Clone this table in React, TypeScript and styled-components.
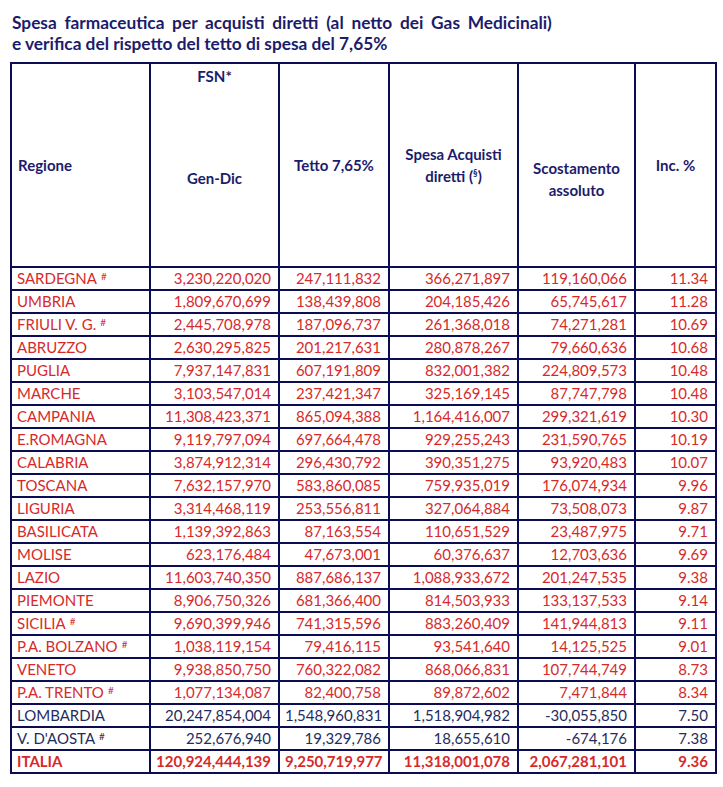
import React from "react";
import styled, { createGlobalStyle } from "styled-components";

const Global = createGlobalStyle`
  html, body { margin: 0; padding: 0; background: #fff; }
  body { font-family: Lato, "Open Sans", "Liberation Sans", sans-serif; }
`;

const Page = styled.div`
  width: 723px;
  height: 787px;
  padding: 12px 0 0 10px;
  box-sizing: border-box;
`;

const Title = styled.h1`
  margin: 0 0 0 2px;
  font-size: 17.3px;
  line-height: 21px;
  font-weight: 700;
  color: #1c1c6b;
`;

const TitleLine = styled.span<{ $ws: number }>`
  display: block;
  word-spacing: ${(p) => p.$ws}px;
`;

const Table = styled.table`
  margin-top: 8px;
  border-collapse: collapse;
  table-layout: fixed;
  width: 705px;
  border: 2.5px solid #0c0c55;
`;

const Th = styled.th<{ $align?: string; $valign?: string }>`
  border: 2px solid #0c0c55;
  height: 202px;
  padding: 0 6px;
  font-size: 15px;
  line-height: 22px;
  font-weight: 700;
  color: #1c1c6b;
  text-align: ${(p) => p.$align || "center"};
  vertical-align: ${(p) => p.$valign || "middle"};
`;

const HeadStack = styled.div`
  display: flex;
  flex-direction: column;
  align-items: center;
  height: 202px;
  justify-content: flex-start;
`;

const Spacer = styled.div<{ $h: number }>`
  height: ${(p) => p.$h}px;
`;

const Td = styled.td<{ $color: string; $bold?: boolean; $left?: boolean }>`
  border: 2px solid #0c0c55;
  height: 21px;
  padding: 0 7px 0 5px;
  font-size: 15px;
  line-height: 19px;
  font-weight: ${(p) => (p.$bold ? 700 : 400)};
  color: ${(p) => p.$color};
  text-align: ${(p) => (p.$left ? "left" : "right")};
  white-space: nowrap;
`;

const Sup = styled.sup`
  font-size: 10px;
  vertical-align: top;
  position: relative;
  top: -2px;
  margin-left: 4px;
`;

const SmallSup = styled.sup`
  font-size: 9px;
  vertical-align: top;
  position: relative;
  top: -3px;
`;

type Row = [string, boolean, string, string, string, string, string];

const RED = "#d62a2a";
const NAVY = "#1f2d5e";

const rows: Row[] = [
  ["SARDEGNA", true, "3,230,220,020", "247,111,832", "366,271,897", "119,160,066", "11.34"],
  ["UMBRIA", false, "1,809,670,699", "138,439,808", "204,185,426", "65,745,617", "11.28"],
  ["FRIULI V. G.", true, "2,445,708,978", "187,096,737", "261,368,018", "74,271,281", "10.69"],
  ["ABRUZZO", false, "2,630,295,825", "201,217,631", "280,878,267", "79,660,636", "10.68"],
  ["PUGLIA", false, "7,937,147,831", "607,191,809", "832,001,382", "224,809,573", "10.48"],
  ["MARCHE", false, "3,103,547,014", "237,421,347", "325,169,145", "87,747,798", "10.48"],
  ["CAMPANIA", false, "11,308,423,371", "865,094,388", "1,164,416,007", "299,321,619", "10.30"],
  ["E.ROMAGNA", false, "9,119,797,094", "697,664,478", "929,255,243", "231,590,765", "10.19"],
  ["CALABRIA", false, "3,874,912,314", "296,430,792", "390,351,275", "93,920,483", "10.07"],
  ["TOSCANA", false, "7,632,157,970", "583,860,085", "759,935,019", "176,074,934", "9.96"],
  ["LIGURIA", false, "3,314,468,119", "253,556,811", "327,064,884", "73,508,073", "9.87"],
  ["BASILICATA", false, "1,139,392,863", "87,163,554", "110,651,529", "23,487,975", "9.71"],
  ["MOLISE", false, "623,176,484", "47,673,001", "60,376,637", "12,703,636", "9.69"],
  ["LAZIO", false, "11,603,740,350", "887,686,137", "1,088,933,672", "201,247,535", "9.38"],
  ["PIEMONTE", false, "8,906,750,326", "681,366,400", "814,503,933", "133,137,533", "9.14"],
  ["SICILIA", true, "9,690,399,946", "741,315,596", "883,260,409", "141,944,813", "9.11"],
  ["P.A. BOLZANO", true, "1,038,119,154", "79,416,115", "93,541,640", "14,125,525", "9.01"],
  ["VENETO", false, "9,938,850,750", "760,322,082", "868,066,831", "107,744,749", "8.73"],
  ["P.A. TRENTO", true, "1,077,134,087", "82,400,758", "89,872,602", "7,471,844", "8.34"],
  ["LOMBARDIA", false, "20,247,854,004", "1,548,960,831", "1,518,904,982", "-30,055,850", "7.50"],
  ["V. D'AOSTA", true, "252,676,940", "19,329,786", "18,655,610", "-674,176", "7.38"],
];

const total: Row = ["ITALIA", false, "120,924,444,139", "9,250,719,977", "11,318,001,078", "2,067,281,101", "9.36"];

export default function App() {
  return (
    <Page>
      <Global />
      <Title>
        <TitleLine $ws={3.5}>
          Spesa farmaceutica per acquisti diretti (al netto dei Gas Medicinali)
        </TitleLine>
        <TitleLine $ws={0}>e verifica del rispetto del tetto di spesa del 7,65%</TitleLine>
      </Title>
      <Table>
        <colgroup>
          <col style={{ width: 139 }} />
          <col style={{ width: 129 }} />
          <col style={{ width: 110 }} />
          <col style={{ width: 129 }} />
          <col style={{ width: 117 }} />
          <col style={{ width: 81 }} />
        </colgroup>
        <thead>
          <tr>
            <Th $align="left">Regione</Th>
            <Th $valign="top">
              <HeadStack>
                <Spacer $h={1} />
                <div>FSN*</div>
                <Spacer $h={80} />
                <div>Gen-Dic</div>
              </HeadStack>
            </Th>
            <Th>Tetto 7,65%</Th>
            <Th>
              Spesa Acquisti
              <br />
              diretti (<SmallSup>§</SmallSup>)
            </Th>
            <Th>
              <Spacer $h={28} />
              Scostamento
              <br />
              assoluto
            </Th>
            <Th>Inc. %</Th>
          </tr>
        </thead>
        <tbody>
          {rows.map((r) => {
            const color = r[6] === "7.50" || r[6] === "7.38" ? NAVY : RED;
            return (
              <tr key={r[0]}>
                <Td $color={color} $left>
                  {r[0]}
                  {r[1] && <Sup>#</Sup>}
                </Td>
                {r.slice(2).map((v, i) => (
                  <Td key={i} $color={color}>
                    {v}
                  </Td>
                ))}
              </tr>
            );
          })}
          <tr>
            <Td $color={RED} $bold $left>
              {total[0]}
            </Td>
            {total.slice(2).map((v, i) => (
              <Td key={i} $color={RED} $bold>
                {v}
              </Td>
            ))}
          </tr>
        </tbody>
      </Table>
    </Page>
  );
}
